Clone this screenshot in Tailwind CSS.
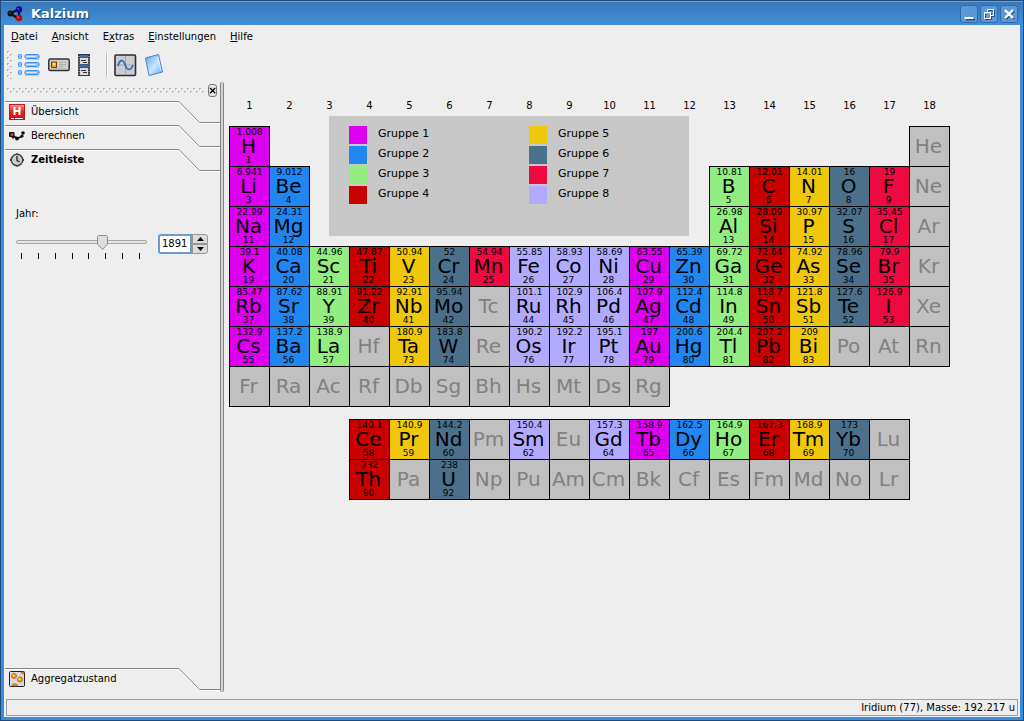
<!DOCTYPE html>
<html lang="de">
<head>
<meta charset="utf-8">
<title>Kalzium</title>
<script src="https://cdn.jsdelivr.net/npm/@tailwindcss/browser@4"></script>
</head>
<body class="h-screen overflow-hidden bg-[#1d4674] font-['DejaVu_Sans',sans-serif] text-[10px] leading-3 text-black">
<div class="flex h-full flex-col rounded-t-sm border border-[#1f4a7a] bg-[#3f8cda] px-[3px] pb-[3px]">

  <header class="-mx-[3px] flex h-6 shrink-0 items-center gap-2 border-t border-[#5ea3e3] bg-linear-to-b from-[#3878b8] to-[#428fdb] pr-[5px] pl-[6px]">
    <svg class="size-4" viewBox="0 0 16 16" aria-hidden="true">
      <path d="M3.500 7.500 11 3.500M3.500 7.500 11 12.500M12 4v8" stroke="#111" stroke-width="2.200"/>
      <circle cx="3.500" cy="7.500" r="3" fill="#111"/><circle cx="12" cy="3.500" r="3.200" fill="#0b0b9c"/><circle cx="12" cy="12" r="3.200" fill="#b20a14"/>
      <circle cx="11.200" cy="2.700" r="1" fill="#5a5ae0"/><circle cx="11.200" cy="11.200" r="1" fill="#f05a60"/><circle cx="3" cy="7" r=".8" fill="#666"/>
    </svg>
    <h1 class="grow text-[13px] leading-4 font-bold text-white [text-shadow:1px_1px_1px_#16406e]">Kalzium</h1>
    <div class="flex gap-[2px]">
      <button aria-label="Minimieren" class="size-[18px] rounded-[3px] border border-[#2f6aa6] bg-[#5b98d5]"><svg viewBox="0 0 16 16"><path d="M5 13.500h9" stroke="#264f7e" stroke-width="2"/><path d="M3.500 12h9" stroke="#fff" stroke-width="2"/></svg></button>
      <button aria-label="Wiederherstellen" class="size-[18px] rounded-[3px] border border-[#2f6aa6] bg-[#5b98d5]"><svg viewBox="0 0 16 16" fill="none"><path d="M7.500 6.500v-2h6v6h-3M4.500 7.500h6v6h-6z" stroke="#264f7e"/><path d="M6.500 5.500v-2h6v6h-3M3.500 6.500h6v6h-6zM3.500 7h6" stroke="#fff"/></svg></button>
      <button aria-label="Schließen" class="size-[18px] rounded-[3px] border border-[#2f6aa6] bg-[#5b98d5]"><svg viewBox="0 0 16 16"><path d="m5 5 8 8m0-8-8 8" stroke="#264f7e" stroke-width="2.400"/><path d="m4 4 8 8m0-8-8 8" stroke="#fff" stroke-width="2.400"/></svg></button>
    </div>
  </header>

  <div class="flex min-h-0 grow flex-col bg-[#eeeeee]">
    <nav class="flex h-6 shrink-0 items-center gap-[14px] pl-[7px]" aria-label="Menü">
      <button><u>D</u>atei</button>
      <button><u>A</u>nsicht</button>
      <button>E<u>x</u>tras</button>
      <button><u>E</u>instellungen</button>
      <button><u>H</u>ilfe</button>
    </nav>

    <div class="flex h-8 shrink-0 items-center pl-[3px]" role="toolbar" aria-label="Werkzeugleiste">
      <svg class="mr-[4px] h-7 w-[7px]" viewBox="0 0 7 28" aria-hidden="true">
        <defs><pattern id="grip" width="6" height="6" patternUnits="userSpaceOnUse"><path d="M0 .5h2M0 1.500h1M3 3.500h2M3 4.500h1" stroke="#b4b4b4"/><path d="M1 1.500h1M4 4.500h1" stroke="#fff"/></pattern></defs>
        <rect width="6" height="28" fill="url(#grip)"/>
      </svg>
      <button aria-label="Liste" class="mr-[7px]"><svg class="h-6 w-[23px]" viewBox="0 0 23 24">
        <g fill="#8cc4ff" stroke="#3b8bee"><rect x=".5" y="1.500" width="3" height="4" rx="1"/><rect x=".5" y="9.500" width="3" height="4" rx="1"/><rect x=".5" y="17.500" width="3" height="4" rx="1"/><rect x="7" y="1.500" width="14" height="4" rx="1.500"/><rect x="7" y="9.500" width="14" height="4" rx="1.500"/><rect x="7" y="17.500" width="14" height="4" rx="1.500"/></g>
        <path d="M4 6.500h1M7 6.500h14M4 14.500h1M7 14.500h14M7 22.500h14" stroke="#c9d3df"/><path d="M8 3.500h10M8 11.500h10M8 19.500h10" stroke="#d3eaff"/></svg></button>
      <button aria-label="Elementkarte" class="mr-[8px]"><svg class="h-6 w-[22px]" viewBox="0 0 22 24">
        <rect x=".8" y="6" width="20.400" height="11.500" rx="1.500" fill="#d0d0d0" stroke="#333" stroke-width="1.500"/><rect x="3.500" y="9" width="5" height="5.500" fill="#f7a823" stroke="#7c3a08"/><rect x="5" y="10" width="2" height="2" fill="#ffe787"/><path d="M11 9.500h4m1 0h2M11 11.500h7M11 13.500h4M5 16h13" stroke="#aaa"/></svg></button>
      <button aria-label="Zeitfilm" class="mr-[16px]"><svg class="h-6 w-3" viewBox="0 0 12 24">
        <rect x="0" y="1" width="12" height="22" fill="#343840"/><path d="M1 3v19M11 3v19" stroke="#ccd" stroke-dasharray="1 1.500"/><path d="M2 3.500h8M2 13h8" stroke="#3f68b5" stroke-width="3"/><path d="M2 5h8v6H2zM2 15h8v7H2z" fill="#dcdcdc"/><path d="M3 7.500h5M5 9.500h4M3 17.500h5M5 19.500h4" stroke="#333"/></svg></button>
      <span class="mr-[6px] h-6 w-[2px] border-r border-l border-r-white border-l-[#bbbbbb]"></span>
      <button aria-label="Diagramm" class="mr-[7px]"><svg class="h-6 w-[23px]" viewBox="0 0 23 24">
        <rect x="1" y="2" width="20.500" height="20.500" rx="1" fill="#c9ccd0" stroke="#2d2d30" stroke-width="1.600"/><path d="M11.500 3v18M2 12h19" stroke="#a4a8ae"/><path d="M4 13C5.500 6.500 9 5.500 11 11.500S16.500 18.500 19 12" fill="none" stroke="#3a68b8" stroke-width="1.700"/></svg></button>
      <button aria-label="Glossar"><svg class="h-6 w-5" viewBox="0 0 20 24">
        <defs><linearGradient id="book" x1="0" y1="0" x2="1" y2="1"><stop offset="0" stop-color="#5aa6f2"/><stop offset=".55" stop-color="#cbe5ff"/><stop offset="1" stop-color="#5ea8f4"/></linearGradient></defs>
        <path d="M1.500 5 14.500 1.500 18.500 19 5 22.500Z" fill="url(#book)" stroke="#4c83c4"/><path d="M14 4 17 18" stroke="#fff" opacity=".6"/></svg></button>
    </div>

    <div class="flex min-h-0 grow">
      <aside class="flex w-[216px] shrink-0 flex-col">
        <div class="flex h-[19px] items-center gap-[4px] pl-[3px]">
          <svg class="h-[6px] grow" aria-hidden="true"><rect width="100%" height="6" fill="url(#grip)"/></svg>
          <button aria-label="Leiste schließen" class="mr-[3px] size-[13px] rounded-[3px] border border-[#777777] bg-[#e4e4e4]"><svg viewBox="0 0 11 11"><path d="m1.500 1.500 8 8m0-8-8 8" stroke="#000" stroke-width="1.800"/></svg></button>
        </div>

        <button class="relative flex h-6 shrink-0 items-start text-left">
          <svg class="absolute top-0 left-[1px] h-6 w-[215px]" viewBox="0 0 215 24" fill="none" aria-hidden="true"><path d="M0 2.500h173L195 23.500h20" stroke="#fff"/><path d="M0 1.500h174L194.500 22.500H215" stroke="#868686"/></svg>
          <span class="relative flex items-center gap-[6px] pt-[4px] pl-[5px]">
            <svg class="size-4" viewBox="0 0 16 16"><defs><linearGradient id="red" x1="0" y1="0" x2="0" y2="1"><stop offset="0" stop-color="#ef9a98"/><stop offset=".5" stop-color="#dc2522"/><stop offset="1" stop-color="#d80b0b"/></linearGradient></defs><rect x=".5" y=".5" width="15" height="15" fill="url(#red)" stroke="#b91c1c"/><path d="M5.500 3v8m5-8v8m-5-4h5" stroke="#fff" stroke-width="2"/><path d="M2 14.500h3m1 0h8" stroke="#fff"/></svg>
            Übersicht</span>
        </button>
        <button class="relative flex h-6 shrink-0 items-start text-left">
          <svg class="absolute top-0 left-[1px] h-6 w-[215px]" viewBox="0 0 215 24" fill="none" aria-hidden="true"><path d="M0 2.500h173L195 23.500h20" stroke="#fff"/><path d="M0 1.500h174L194.500 22.500H215" stroke="#868686"/></svg>
          <span class="relative flex items-center gap-[6px] pt-[4px] pl-[5px]">
            <svg class="size-4" viewBox="0 0 16 16"><path d="M2.500 6.500 8 10.500 14 8" fill="none" stroke="#111" stroke-width="1.600"/><rect x="0" y="4" width="5.500" height="5" rx="1" fill="#111"/><circle cx="3" cy="6.500" r="1.500" fill="#e03c30"/><circle cx="8" cy="10.500" r="1.900" fill="#111"/><circle cx="14" cy="5" r="1.800" fill="#111"/><circle cx="13" cy="8" r="1.600" fill="#111"/><circle cx="4" cy="9.500" r="1.200" fill="#222"/></svg>
            Berechnen</span>
        </button>
        <button class="relative flex h-6 shrink-0 items-start text-left font-bold" aria-current="true">
          <svg class="absolute top-0 left-[1px] h-6 w-[215px]" viewBox="0 0 215 24" fill="none" aria-hidden="true"><path d="M0 2.500h173L195 23.500h20" stroke="#fff"/><path d="M0 1.500h174L194.500 22.500H215" stroke="#868686"/></svg>
          <span class="relative flex items-center gap-[6px] pt-[4px] pl-[5px]">
            <svg class="size-4" viewBox="0 0 16 16"><path d="M1 8h14M8 1.500v13" stroke="#444" stroke-width="2"/><circle cx="8" cy="8" r="5.800" fill="#c7cace" stroke="#3c3f44" stroke-width="1.400"/><path d="M8 4v4.500l2.500 1.500" fill="none" stroke="#222" stroke-width="1.300"/></svg>
            Zeitleiste</span>
        </button>

        <div class="flex flex-col pt-9 pl-3">
          <label for="year">Jahr:</label>
          <div class="flex items-start gap-[11px] pt-[14px]">
            <div class="w-[131px]">
              <input id="year" type="range" min="1700" max="1990" value="1896" class="block h-[15px] w-full appearance-none bg-transparent [&::-webkit-slider-runnable-track]:h-1 [&::-webkit-slider-runnable-track]:rounded-full [&::-webkit-slider-runnable-track]:border [&::-webkit-slider-runnable-track]:border-[#a4a4a4] [&::-webkit-slider-runnable-track]:bg-[#e6e6e6] [&::-webkit-slider-thumb]:-mt-[6px] [&::-webkit-slider-thumb]:h-[15px] [&::-webkit-slider-thumb]:w-[11px] [&::-webkit-slider-thumb]:appearance-none [&::-webkit-slider-thumb]:bg-[url('data:image/svg+xml,%3Csvg%20xmlns=%22http://www.w3.org/2000/svg%22%20viewBox=%220%200%2011%2015%22%3E%3Cpath%20d=%22M1.5%20.5h8l1%201V9l-5%205.5L.5%209V1.5z%22%20fill=%22%23dcdde2%22%20stroke=%22%238a8c92%22/%3E%3C/svg%3E')]">
              <div class="flex justify-between pt-[4px] pr-[7px] pl-[5px]" aria-hidden="true">
                <i class="h-[6px] w-px bg-black"></i><i class="h-[6px] w-px bg-black"></i><i class="h-[6px] w-px bg-black"></i><i class="h-[6px] w-px bg-black"></i><i class="h-[6px] w-px bg-black"></i><i class="h-[6px] w-px bg-black"></i><i class="h-[6px] w-px bg-black"></i><i class="h-[6px] w-px bg-black"></i>
              </div>
            </div>
            <div class="flex h-5 w-[50px]">
              <input type="text" value="1891" aria-label="Jahr" class="w-[34px] rounded-l-[3px] border-2 border-[#6a9bd0] bg-white pl-[2px] text-[10px]">
              <div class="flex w-4 flex-col">
                <button aria-label="Erhöhen" class="flex h-[10px] items-center justify-center rounded-tr-[3px] border border-[#969696] bg-[#dcdcdc]"><svg class="h-1 w-[7px]" viewBox="0 0 7 4"><path d="M0 4 3.500 0 7 4z"/></svg></button>
                <button aria-label="Verringern" class="flex h-[10px] items-center justify-center rounded-br-[3px] border border-[#969696] bg-[#dcdcdc]"><svg class="h-1 w-[7px]" viewBox="0 0 7 4"><path d="M0 0 3.500 4 7 0z"/></svg></button>
              </div>
            </div>
          </div>
        </div>

        <button class="relative mt-auto mb-2 flex h-6 shrink-0 items-start text-left">
          <svg class="absolute top-0 left-[1px] h-6 w-[215px]" viewBox="0 0 215 24" fill="none" aria-hidden="true"><path d="M0 2.500h173L195 23.500h20" stroke="#fff"/><path d="M0 1.500h174L194.500 22.500H215" stroke="#868686"/></svg>
          <span class="relative flex items-center gap-[6px] pt-[4px] pl-[5px]">
            <svg class="size-4" viewBox="0 0 16 16"><rect x=".5" y=".5" width="15" height="15" rx="1" fill="#d5d8dc" stroke="#222"/><g fill="#f59a1c" stroke="#a9520a" stroke-width=".7"><circle cx="5" cy="5" r="2.500"/><circle cx="11" cy="8.500" r="2.500"/><path d="M3 15a2.800 2.800 0 0 1 5.500 0zM12 1a2 2 0 0 0 3 1.500V1z"/></g><circle cx="4.500" cy="4.500" r="1" fill="#ffe08a"/><circle cx="10.500" cy="8" r="1" fill="#ffe08a"/></svg>
            Aggregatzustand</span>
        </button>
      </aside>

      <div class="mt-[1px] mb-[7px] w-1 shrink-0 rounded-full border-x border-[#85868c] bg-[#d2d3d8]" role="separator" aria-orientation="vertical"></div>

      <main class="grow pt-[19px] pl-[5px]">
        <div class="relative w-[721px]">
          <table class="w-[721px] table-fixed border-collapse" aria-label="Periodensystem">
            <thead><tr id="groups"></tr></thead>
            <tbody id="elements"></tbody>
          </table>
          <div class="absolute top-4 left-[100px] h-[120px] w-[360px] bg-[#c8c8c8] pt-[10px] pl-5 text-[11px]">
            <ul class="grid w-[360px] grid-flow-col grid-cols-2 grid-rows-4 gap-y-[2px]">
              <li class="flex h-[18px] gap-[11px]"><span class="size-[18px] bg-[#dd00ee]"></span><span class="pt-[2px]">Gruppe 1</span></li>
              <li class="flex h-[18px] gap-[11px]"><span class="size-[18px] bg-[#2286f0]"></span><span class="pt-[2px]">Gruppe 2</span></li>
              <li class="flex h-[18px] gap-[11px]"><span class="size-[18px] bg-[#92ee80]"></span><span class="pt-[2px]">Gruppe 3</span></li>
              <li class="flex h-[18px] gap-[11px]"><span class="size-[18px] bg-[#c80000]"></span><span class="pt-[2px]">Gruppe 4</span></li>
              <li class="flex h-[18px] gap-[11px]"><span class="size-[18px] bg-[#efc80b]"></span><span class="pt-[2px]">Gruppe 5</span></li>
              <li class="flex h-[18px] gap-[11px]"><span class="size-[18px] bg-[#4a708b]"></span><span class="pt-[2px]">Gruppe 6</span></li>
              <li class="flex h-[18px] gap-[11px]"><span class="size-[18px] bg-[#ee0a40]"></span><span class="pt-[2px]">Gruppe 7</span></li>
              <li class="flex h-[18px] gap-[11px]"><span class="size-[18px] bg-[#b2aaff]"></span><span class="pt-[2px]">Gruppe 8</span></li>
            </ul>
          </div>
        </div>
      </main>
    </div>

    <footer class="mx-[2px] mb-px flex h-[17px] shrink-0 items-center justify-end border border-[#a0a0a0] pr-[2px]">Iridium (77), Masse: 192.217 u</footer>
  </div>
</div>

<script>
  // Cell background for each group; 0 marks elements not yet discovered.
  const colors = ['bg-[#c0c0c0] text-[#808080]', 'bg-[#dd00ee]', 'bg-[#2286f0]', 'bg-[#92ee80]', 'bg-[#c80000]', 'bg-[#efc80b]', 'bg-[#4a708b]', 'bg-[#ee0a40]', 'bg-[#b2aaff]'];
  // Each entry: symbol, or symbol:mass:number:group. A dot with a count skips columns.
  const rows = [
    'H:1.008:1:1 .16 He',
    'Li:6.941:3:1 Be:9.012:4:2 .10 B:10.81:5:3 C:12.01:6:4 N:14.01:7:5 O:16:8:6 F:19:9:7 Ne',
    'Na:22.99:11:1 Mg:24.31:12:2 .10 Al:26.98:13:3 Si:28.09:14:4 P:30.97:15:5 S:32.07:16:6 Cl:35.45:17:7 Ar',
    'K:39.1:19:1 Ca:40.08:20:2 Sc:44.96:21:3 Ti:47.87:22:4 V:50.94:23:5 Cr:52:24:6 Mn:54.94:25:7 Fe:55.85:26:8 Co:58.93:27:8 Ni:58.69:28:8 Cu:63.55:29:1 Zn:65.39:30:2 Ga:69.72:31:3 Ge:72.64:32:4 As:74.92:33:5 Se:78.96:34:6 Br:79.9:35:7 Kr',
    'Rb:85.47:37:1 Sr:87.62:38:2 Y:88.91:39:3 Zr:91.22:40:4 Nb:92.91:41:5 Mo:95.94:42:6 Tc Ru:101.1:44:8 Rh:102.9:45:8 Pd:106.4:46:8 Ag:107.9:47:1 Cd:112.4:48:2 In:114.8:49:3 Sn:118.7:50:4 Sb:121.8:51:5 Te:127.6:52:6 I:126.9:53:7 Xe',
    'Cs:132.9:55:1 Ba:137.2:56:2 La:138.9:57:3 Hf Ta:180.9:73:5 W:183.8:74:6 Re Os:190.2:76:8 Ir:192.2:77:8 Pt:195.1:78:8 Au:197:79:1 Hg:200.6:80:2 Tl:204.4:81:3 Pb:207.2:82:4 Bi:209:83:5 Po At Rn',
    'Fr Ra Ac Rf Db Sg Bh Hs Mt Ds Rg .7',
    '',
    '.3 Ce:140.1:58:4 Pr:140.9:59:5 Nd:144.2:60:6 Pm Sm:150.4:62:8 Eu Gd:157.3:64:8 Tb:158.9:65:1 Dy:162.5:66:2 Ho:164.9:67:3 Er:167.3:68:4 Tm:168.9:69:5 Yb:173:70:6 Lu .1',
    '.3 Th:232:90:4 Pa U:238:92:6 Np Pu Am Cm Bk Cf Es Fm Md No Lr .1'
  ];
  const cell = ([symbol, mass = '', number = '', group = 0]) =>
    `<td class="h-10 border border-black p-0 align-top ${colors[group]}"><div class="h-[10px] text-center text-[9px] leading-[10px]">${mass}</div><div class="-mx-1 h-[18px] pr-[2px] text-center text-[20px] leading-[18px]">${symbol}</div><div class="h-[10px] pr-[2px] text-center text-[9px] leading-[10px]">${number}</div></td>`;
  document.getElementById('groups').innerHTML =
    Array.from({ length: 18 }, (_, i) => `<th class="h-[26px] p-0 align-top font-normal">${i + 1}</th>`).join('');
  document.getElementById('elements').innerHTML = rows.map(row => row
    ? '<tr>' + row.split(' ').map(e => e[0] === '.' ? `<td class="h-10 p-0" colspan="${e.slice(1)}"></td>` : cell(e.split(':'))).join('') + '</tr>'
    : '<tr><td class="h-[13px] p-0" colspan="18"></td></tr>').join('');
</script>
</body>
</html>
